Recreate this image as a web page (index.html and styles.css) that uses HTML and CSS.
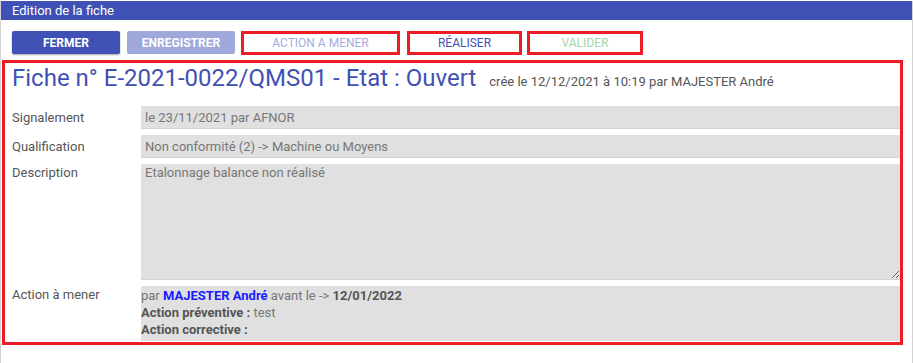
FILE: index.html
```html
<!DOCTYPE html>
<html lang="fr">
<head>
<meta charset="utf-8">
<title>Edition de la fiche</title>
<link rel="stylesheet" href="styles.css">
</head>
<body>
<div class="window">
  <div class="titlebar">Edition de la fiche</div>
  <div class="toolbar">
    <button class="btn btn-primary btn-fermer">FERMER</button>
    <button class="btn btn-disabled">ENREGISTRER</button>
    <button class="btn btn-outline btn-action">ACTION A MENER</button>
    <button class="btn btn-outline btn-realiser">RÉALISER</button>
    <button class="btn btn-outline btn-valider">VALIDER</button>
  </div>
  <div class="fiche">
    <div class="fiche-head">
      <h1 class="fiche-title">Fiche n° E-2021-0022/QMS01 - Etat : Ouvert</h1>
      <span class="fiche-meta">crée le 12/12/2021 à 10:19 par MAJESTER André</span>
    </div>
    <div class="form">
      <div class="label">Signalement</div>
      <div class="field">le 23/11/2021 par AFNOR</div>
      <div class="label">Qualification</div>
      <div class="field">Non conformité (2) -&gt; Machine ou Moyens</div>
      <div class="label label-top">Description</div>
      <textarea class="field field-area" readonly>Etalonnage balance non réalisé</textarea>
      <div class="label label-top">Action à mener</div>
      <div class="field field-action">
        <div>par <b class="who">MAJESTER André</b> avant le -&gt; <b>12/01/2022</b></div>
        <div><b>Action préventive :</b> test</div>
        <div><b>Action corrective :</b></div>
      </div>
    </div>
  </div>
</div>
</body>
</html>
```
FILE: styles.css
```css
html, body {
  margin: 0;
  padding: 0;
  background: #fff;
}
body {
  font-family: Roboto, "Liberation Sans", Arial, sans-serif;
  color: #555;
}
.window {
  margin-top: 1px;
  width: 911px;
  height: 362px;
  border-left: 1px solid #d4d4d4;
  border-right: 1px solid #d4d4d4;
}
.titlebar {
  height: 19px;
  background: #3f51b5;
  color: #fff;
  font-size: 13px;
  line-height: 19px;
  padding-left: 11px;
}
.toolbar {
  display: flex;
  gap: 6px;
  padding: 11px 0 0 11px;
  height: 24px;
}
.btn {
  box-sizing: border-box;
  height: 24px;
  font-family: Roboto, "Liberation Sans", Arial, sans-serif;
  font-size: 12px;
  padding: 0;
  border: none;
  background: #fff;
  cursor: pointer;
}
.btn-primary {
  width: 108px;
  height: 23px;
  background: #3f51b5;
  color: #fff;
  font-weight: 700;
  border-radius: 2px;
  box-shadow: 0 1px 2px rgba(0,0,0,0.35);
}
.btn-fermer { margin-right: 1px; }
.btn-disabled {
  width: 108px;
  height: 23px;
  background: #9fa8da;
  color: #fff;
  font-weight: 700;
  border-radius: 2px;
}
.btn-outline {
  border: 3px solid #ee1c25;
  background: #fff;
}
.btn-action { width: 159px; color: #a4abde; }
.btn-realiser { width: 115px; color: #3f51b5; margin-left: 1px; }
.btn-valider { width: 116px; color: #a5d6a7; margin-left: -1px; }
.fiche {
  box-sizing: border-box;
  margin: 5px 0 0 1px;
  width: 901px;
  height: 285px;
  border: 3px solid #ee1c25;
}
.fiche-head {
  display: flex;
  align-items: baseline;
  padding: 0 0 0 7px;
  height: 43px;
}
.fiche-title {
  margin: 0;
  font-size: 24px;
  font-weight: 400;
  line-height: 30px;
  color: #3f51b5;
}
.fiche-meta {
  margin-left: 13px;
  font-size: 13px;
  color: #555;
}
.form {
  display: grid;
  grid-template-columns: 129px 1fr;
  row-gap: 6px;
  padding-left: 7px;
}
.label {
  font-size: 13px;
  line-height: 23px;
  color: #555;
}
.label-top {
  line-height: 17px;
}
.field {
  box-sizing: border-box;
  background: #e0e0e0;
  border-bottom: 1px solid #d2d2d2;
  font-size: 13px;
  line-height: 23px;
  height: 23px;
  padding: 0 4px;
  color: #777;
}
.field-area {
  display: block;
  width: 100%;
  height: 116px;
  margin: 0;
  border: none;
  border-bottom: 1px solid #d2d2d2;
  font-family: Roboto, "Liberation Sans", Arial, sans-serif;
  line-height: 17px;
  padding-top: 0;
  resize: vertical;
  outline: none;
}
.field-action {
  height: 55px;
  line-height: 17px;
  padding: 1px 0 0 0;
  border-bottom: none;
  color: #777;
}
.field-action b {
  color: #555;
  font-weight: 700;
}
.field-action b.who {
  color: #1a1aff;
}
```
